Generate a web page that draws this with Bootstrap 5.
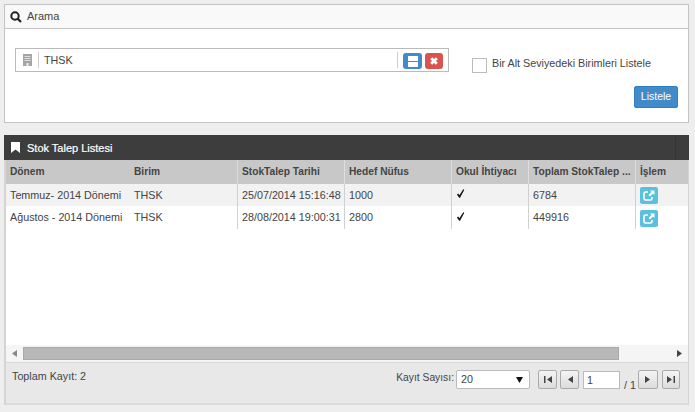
<!DOCTYPE html>
<html lang="en">
<head>
  <meta charset="UTF-8" />
  <title>Stok Talep Listesi</title>
  <link rel="stylesheet" href="https://cdn.jsdelivr.net/npm/bootstrap@5.3.0/dist/css/bootstrap.min.css" />
  <style>
    html, body { height: 412px; overflow: hidden; }
    body {
      background: #eeeeee;
      padding: 4px 6px 0 4px;
      font-family: "Liberation Sans", Arial, sans-serif;
      font-size: 10.75px;
      color: #444;
    }
    .search-box { height: 119px; border: 1px solid #c4c4c4; background: #fff; margin-bottom: 12px; }
    .search-head { height: 24px; background: #f9f9f9; border-bottom: 1px solid #c4c4c4; padding-left: 5px; gap: 5px; }
    .search-title { font-size: 11px; }
    .search-body { padding: 19px 10px 0 10px; }
    .unit-box { width: 434px; height: 24px; border: 1px solid #bbb; padding: 3px 5px 3px 7px; }
    .unit-sep { width: 1px; height: 16px; background: #ccc; }
    .unit-sep-left { margin-left: 6px; }
    .unit-sep-right { margin-right: 5px; }
    .unit-text { padding-left: 5px; }
    .mini-btn { height: 16px; border-radius: 3px; margin-top: 2px; }
    .mini-blue { width: 19px; background: #428bca; margin-right: 3px; }
    .mini-red { width: 18px; background: #d9534f; }
    .check-area { margin-left: 23px; gap: 5px; }
    .check-sq { width: 15px; height: 15px; border: 1px solid #bbb; margin-top: 10px; }
    .check-label { margin-top: 7px; line-height: 16px; }
    .list-btn { width: 44px; height: 22px; background: #428bca; border: 1px solid #357ebd; border-radius: 2px; color: #fff; font-size: 10.5px; padding: 0; margin: 13px 0 0 auto; display: block; }
    .list-head { height: 25px; background: #3d3d3d; color: #fff; padding-left: 7px; gap: 7px; -webkit-text-stroke: 0.2px #fff; font-size: 11px; }
    .list-title { margin-top: 2px; }
    .head-line { width: 1px; height: 25px; background: #353535; margin-left: auto; margin-right: 13px; }
    .list-inner { height: 245px; border-left: 2px solid #d4d4d4; border-right: 1px solid #d4d4d4; border-bottom: 2px solid #dcdcdc; background: #fff; }
    .grid-cols { display: grid; grid-template-columns: 122px 110px 107px 107px 77px 107px 52px; }
    .grid-head { height: 24px; background: #c8c8c8; font-weight: 700; font-size: 10.2px; }
    .grid-row { height: 22px; }
    .grid-row-last { height: 23px; }
    .grid-odd { background: #f2f2f2; }
    .grid-cell { padding: 0 4px; display: flex; align-items: center; white-space: nowrap; border-right: 1px solid #d0d0d0; }
    .grid-head .grid-cell { border-right-color: #dedede; }
    .grid-cell:first-child { border-right: 0; }
    .grid-cell:nth-child(2) { padding-left: 6px; }
    .grid-cell:last-child { border-right: 0; }
    .check-mark { margin-top: -3px; }
    .grid-space { height: 116px; }
    .open-btn { width: 18px; height: 17px; background: #5bc0de; border-radius: 2px; margin-top: 1px; }
    .scroll-bar { height: 17px; background: #f5f5f5; padding: 0 6px; }
    .scroll-track { flex: 1; padding-left: 6px; }
    .scroll-thumb { width: 596px; height: 13px; background: #b8b8b8; border: 1px solid #a8a8a8; }
    .foot-bar { height: 41px; background: #e8e8e8; border-top: 1px solid #d8d8d8; padding: 7px 8px 0 6px; }
    .foot-total { line-height: 12px; }
    .foot-size { line-height: 16px; font-size: 10.3px; }
    .size-select { width: 74px; height: 19px; border: 1px solid #bbb; background: #fff; padding: 0 6px 0 4px; border-radius: 2px; margin: 0 8px 0 2px; }
    .page-btn { width: 19px; height: 19px; border: 1px solid #aaa; border-radius: 2px; background: linear-gradient(#f4f4f4, #dcdcdc); }
    .page-prev { margin: 0 4px 0 3px; }
    .page-next { width: 20px; margin-right: 4px; }
    .page-last { width: 18px; }
    .page-input { width: 37px; height: 18px; border: 1px solid #bbb; background: #fff; padding-left: 3px; margin-top: 1px; line-height: 16px; }
    .page-total { margin: 7px 3px 0 4px; line-height: 16px; width: 11px; white-space: nowrap; }
  </style>
</head>
<body>
  <div class="search-box">
    <div class="search-head d-flex align-items-center">
      <svg width="12" height="12" viewBox="0 0 12 12"><circle cx="5" cy="5" r="3.7" fill="none" stroke="#222" stroke-width="2"/><path d="M7.6 7.6L11 11" stroke="#222" stroke-width="2.2"/></svg>
      <span class="search-title">Arama</span>
    </div>
    <div class="search-body">
      <div class="d-flex align-items-start">
        <div class="unit-box d-flex align-items-center">
          <svg width="9" height="12" viewBox="0 0 9 12"><rect width="9" height="12" fill="#a5a5a5"/><path d="M1.5 2.5h6M1.5 4.5h6M1.5 6.5h6" stroke="#ddd"/><rect x="3.500" y="9" width="2" height="3" fill="#eee"/></svg>
          <span class="unit-sep unit-sep-left"></span>
          <span class="unit-text flex-grow-1">THSK</span>
          <span class="unit-sep unit-sep-right"></span>
          <span class="mini-btn mini-blue d-flex align-items-center justify-content-center"><svg width="10" height="11" viewBox="0 0 10 11"><rect width="10" height="5" fill="#fff"/><rect y="6" width="10" height="5" fill="#fff"/></svg></span>
          <span class="mini-btn mini-red d-flex align-items-center justify-content-center"><svg width="8" height="8" viewBox="0 0 8 8"><path d="M1.200 1.200L6.800 6.800M6.800 1.200L1.200 6.800" stroke="#fff" stroke-width="2.800"/></svg></span>
        </div>
        <div class="check-area d-flex align-items-start">
          <span class="check-sq"></span>
          <span class="check-label">Bir Alt Seviyedeki Birimleri Listele</span>
        </div>
      </div>
      <button class="list-btn" type="button">Listele</button>
    </div>
  </div>
  <div class="list-head d-flex align-items-center">
    <svg width="9" height="11" viewBox="0 0 9 11"><path d="M0 0h9v11L4.500 7.500 0 11z" fill="#fff"/></svg>
    <span class="list-title">Stok Talep Listesi</span>
    <span class="head-line"></span>
  </div>
  <div class="list-inner">
    <div class="grid-cols grid-head">
      <div class="grid-cell">Dönem</div><div class="grid-cell">Birim</div><div class="grid-cell">StokTalep Tarihi</div><div class="grid-cell">Hedef Nüfus</div><div class="grid-cell">Okul İhtiyacı</div><div class="grid-cell">Toplam StokTalep ...</div><div class="grid-cell">İşlem</div>
    </div>
    <div class="grid-cols grid-row grid-odd">
      <div class="grid-cell">Temmuz- 2014 Dönemi</div><div class="grid-cell">THSK</div><div class="grid-cell">25/07/2014 15:16:48</div><div class="grid-cell">1000</div><div class="grid-cell"><svg class="check-mark" width="9" height="9" viewBox="0 0 9 10"><path d="M0.500 6L2 5 3.300 7 7.500 0.300 8.700 0.800 4 9.700 3 9.700z" fill="#111"/></svg></div><div class="grid-cell">6784</div><div class="grid-cell"><span class="open-btn d-flex align-items-center justify-content-center"><svg width="12" height="11" viewBox="0 0 12 11"><path d="M5 2H2.500A1.500 1.500 0 0 0 1 3.500v5A1.500 1.500 0 0 0 2.500 10h5A1.500 1.500 0 0 0 9 8.500V7" fill="none" stroke="#fff" stroke-width="1.600"/><path d="M7 0.500h4.500V5L10 3.500 7 6.500 5.500 5l3-3z" fill="#fff"/></svg></span></div>
    </div>
    <div class="grid-cols grid-row-last">
      <div class="grid-cell">Ağustos - 2014 Dönemi</div><div class="grid-cell">THSK</div><div class="grid-cell">28/08/2014 19:00:31</div><div class="grid-cell">2800</div><div class="grid-cell"><svg class="check-mark" width="9" height="9" viewBox="0 0 9 10"><path d="M0.500 6L2 5 3.300 7 7.500 0.300 8.700 0.800 4 9.700 3 9.700z" fill="#111"/></svg></div><div class="grid-cell">449916</div><div class="grid-cell"><span class="open-btn d-flex align-items-center justify-content-center"><svg width="12" height="11" viewBox="0 0 12 11"><path d="M5 2H2.500A1.500 1.500 0 0 0 1 3.500v5A1.500 1.500 0 0 0 2.500 10h5A1.500 1.500 0 0 0 9 8.500V7" fill="none" stroke="#fff" stroke-width="1.600"/><path d="M7 0.500h4.500V5L10 3.500 7 6.500 5.500 5l3-3z" fill="#fff"/></svg></span></div>
    </div>
    <div class="grid-space"></div>
    <div class="scroll-bar d-flex align-items-center">
      <svg width="5" height="7" viewBox="0 0 5 7"><path d="M5 0v7L0 3.500z" fill="#888"/></svg>
      <div class="scroll-track"><div class="scroll-thumb"></div></div>
      <svg width="5" height="7" viewBox="0 0 5 7"><path d="M0 0v7l5-3.500z" fill="#444"/></svg>
    </div>
    <div class="foot-bar d-flex align-items-start">
      <span class="foot-total flex-grow-1">Toplam Kayıt: 2</span>
      <span class="foot-size">Kayıt Sayısı:</span>
      <div class="size-select d-flex align-items-center justify-content-between"><span>20</span><svg width="7" height="6" viewBox="0 0 7 6"><path d="M0 0h7L3.500 6z" fill="#111"/></svg></div>
      <span class="page-btn d-flex align-items-center justify-content-center"><svg width="8" height="7" viewBox="0 0 8 7"><path d="M0 0h1.500v7H0zM8 0v7L3 3.500z" fill="#444"/></svg></span>
      <span class="page-btn page-prev d-flex align-items-center justify-content-center"><svg width="6" height="7" viewBox="0 0 6 7"><path d="M6 0v7L1 3.500z" fill="#444"/></svg></span>
      <div class="page-input">1</div>
      <span class="page-total">/ 1</span>
      <span class="page-btn page-next d-flex align-items-center justify-content-center"><svg width="6" height="7" viewBox="0 0 6 7"><path d="M0 0v7l5-3.500z" fill="#444"/></svg></span>
      <span class="page-btn page-last d-flex align-items-center justify-content-center"><svg width="8" height="7" viewBox="0 0 8 7"><path d="M0 0v7l5-3.500zM6.500 0H8v7H6.500z" fill="#444"/></svg></span>
    </div>
  </div>
  <script src="https://cdn.jsdelivr.net/npm/bootstrap@5.3.0/dist/js/bootstrap.bundle.min.js"></script>
</body>
</html>
